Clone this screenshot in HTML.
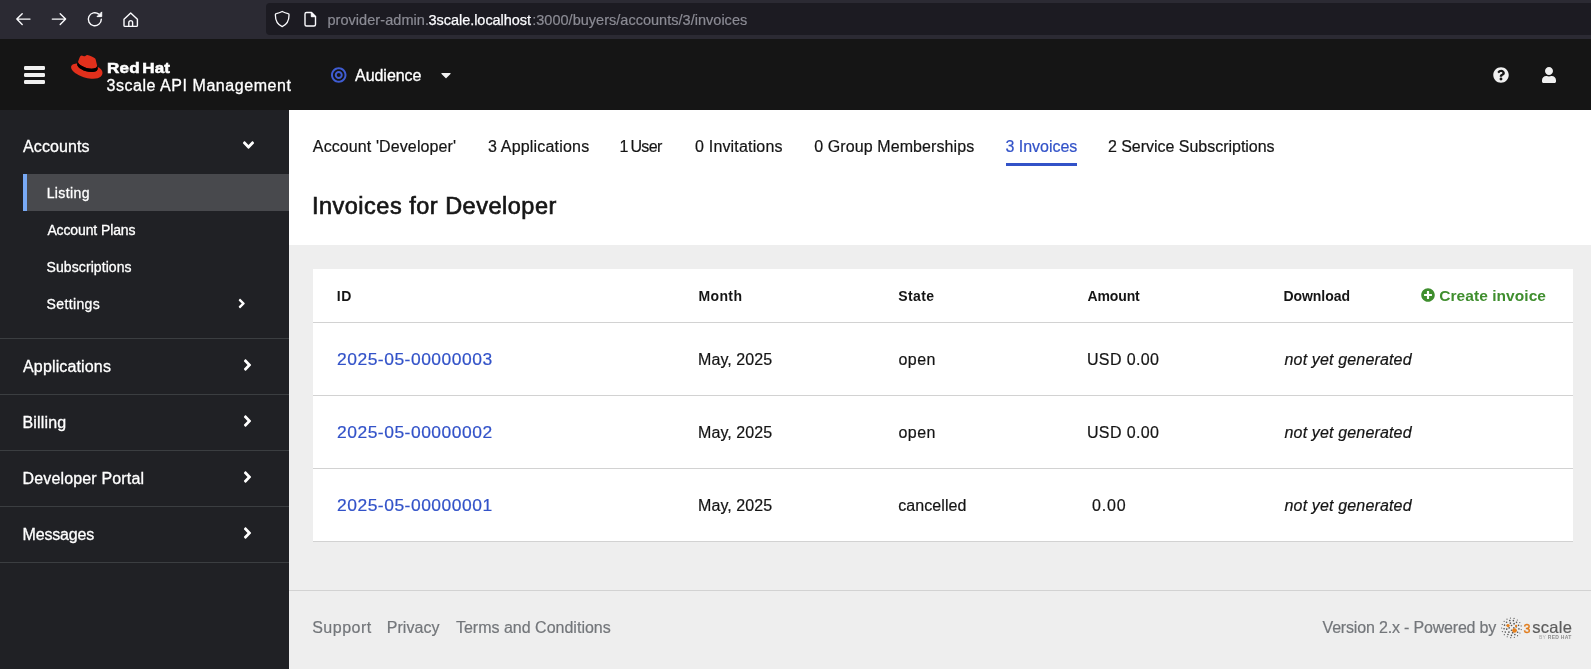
<!DOCTYPE html>
<html lang="en"><head><meta charset="utf-8"><title>Invoices for Developer | Red Hat 3scale API Management</title>
<style>
html,body{margin:0;padding:0;width:1591px;height:669px;overflow:hidden;background:#eeeeee;font-family:'Liberation Sans', sans-serif;}
*{box-sizing:border-box}
a{text-decoration:none}
h1{margin:0}
.t{position:absolute;white-space:pre;display:block;margin:0;padding:0;}
.ic{position:absolute;display:block;overflow:visible}
#page{position:absolute;left:0;top:0;width:1591px;height:669px;will-change:transform;overflow:hidden}
#chrome{position:absolute;left:0;top:0;width:1591px;height:39px;background:#2b2a33}
#urlbar{position:absolute;left:266px;top:3px;width:1335px;height:32px;border-radius:4px;background:#1c1b22}
#masthead{position:absolute;left:0;top:39px;width:1591px;height:71px;background:#151515}
#sidebar{position:absolute;left:0;top:110px;width:289px;height:559px;background:#202125}
#sidebar .current{position:absolute;left:23px;top:174px;width:266px;height:37px;background:#48494d;border-left:4px solid #78a9f5}
.div{position:absolute;left:0;width:289px;height:1px;background:#3b3e41}
#pagehead{position:absolute;left:289px;top:110px;width:1302px;height:135px;background:#fff}
#tabline{position:absolute;left:1006px;top:163px;width:71px;height:3px;background:#3252c8}
#card{position:absolute;left:313px;top:269px;width:1260px;height:273px;background:#fff}
.rule{position:absolute;left:313px;width:1260px;height:1px;background:#d2d2d2}
#footrule{position:absolute;left:289px;top:590px;width:1302px;height:1px;background:#d2d2d2}
.bar{position:absolute;left:24.400px;width:21px;height:4px;border-radius:1.200px;background:#f0f0f0}
</style></head>
<body>
<div id="page">
<div id="chrome">
 <div id="urlbar"></div>
 
<svg class="ic" style="left:0;top:0" width="1591" height="39" viewBox="0 0 1591 39" fill="none" stroke="#fbfbfe" stroke-width="1.400" stroke-linecap="round" stroke-linejoin="round">
 <path d="M30 19.100H17M22.200 13.700 16.800 19.100l5.400 5.400"/>
 <path d="M52.300 19.100h13M60.200 13.700l5.400 5.400-5.400 5.400"/>
 <path d="M101.300 19.200a6.500 6.500 0 1 1-2.500-5.100"/>
 <path d="M101.700 12.300v4.300h-4.300z" fill="#fbfbfe" stroke-width="1"/>
 <path d="M124 19.300l6.700-6.300 6.700 6.300v6.100a1 1 0 0 1-1 1h-11.400a1 1 0 0 1-1-1z"/>
 <path d="M128.800 26.200v-3.700a1.900 1.900 0 0 1 3.800 0v3.700"/>
 <path d="M282.2 11.5c-2 1.1-4.1 1.8-5.9 2.1a1.1 1.1 0 0 0-.95 1.1c0 5.9 1.9 9.7 6.850 11.9 4.950-2.200 6.850-6 6.850-11.900a1.100 1.100 0 0 0-.95-1.100c-1.800-.3-3.900-1-5.900-2.100z" stroke-width="1.3"/>
 <path d="M305 14a1.500 1.500 0 0 1 1.500-1.500h5l4 4v8a1.500 1.500 0 0 1-1.500 1.500h-7.500a1.500 1.500 0 0 1-1.500-1.500z" stroke-width="1.400"/>
 <path d="M311.300 12.600v4.100h4.100z" fill="#fbfbfe" stroke-width="1"/>
</svg>
 <span class="t" style="left:327.41px;top:8.98px;font-size:14.5px;line-height:22px;font-weight:400;color:#8b8b94;letter-spacing:0.058px;-webkit-text-stroke:0.2px #8b8b94;">provider-admin.</span><span class="t" style="left:428.61px;top:8.98px;font-size:14.5px;line-height:22px;font-weight:400;color:#fbfbfe;letter-spacing:-0.050px;-webkit-text-stroke:0.25px #fbfbfe;">3scale.localhost</span><span class="t" style="left:532.21px;top:8.98px;font-size:14.5px;line-height:22px;font-weight:400;color:#8b8b94;letter-spacing:0.020px;-webkit-text-stroke:0.2px #8b8b94;">:3000/buyers/accounts/3/invoices</span>
</div>
<header id="masthead"></header>
<div class="bar" style="top:65.500px"></div><div class="bar" style="top:73px"></div><div class="bar" style="top:80.400px"></div>
<svg class="ic" style="left:70.9px;top:55.4px" width="31.6" height="23.8" viewBox="0 0 191.4 145" preserveAspectRatio="none"><path fill="#e1301c" d="M127.47,83.49c12.51,0,30.61-2.58,30.61-17.46a14,14,0,0,0-.31-3.42l-7.45-32.36c-1.72-7.12-3.23-10.35-15.73-16.6C124.89,8.69,103.76.5,97.51.5,91.69.5,90,8,83.06,8c-6.680,0-11.640-5.600-17.890-5.600-6,0-9.910,4.090-12.930,12.500,0,0-8.410,23.720-9.490,27.160A6.430,6.430,0,0,0,42.530,44c0,9.220,36.300,39.450,84.940,39.450M160,72.070c1.730,8.190,1.730,9.050,1.730,10.130,0,14-15.740,21.770-36.430,21.770C78.540,104,37.580,76.600,37.580,58.490a18.450,18.450,0,0,1,1.510-7.330C22.270,52,.5,55,.5,74.220c0,31.480,74.590,70.280,133.650,70.280,45.280,0,56.700-20.480,56.700-36.650,0-12.720-11-27.160-30.830-35.780"/><path fill="#000" d="M160,72.070c1.730,8.190,1.730,9.050,1.730,10.130,0,14-15.740,21.770-36.430,21.770C78.540,104,37.580,76.600,37.580,58.490a18.450,18.450,0,0,1,1.510-7.330l3.660-9.060A6.430,6.430,0,0,0,42.530,44c0,9.220,36.300,39.450,84.940,39.450,12.510,0,30.610-2.580,30.610-17.460a14,14,0,0,0-.31-3.420Z"/></svg>
<span class="t" style="left:106.72px;top:55.53px;font-size:15.5px;line-height:24px;font-weight:700;color:#fff;letter-spacing:0.150px;word-spacing:-2.2px;-webkit-text-stroke:0.55px #fff;transform-origin:0 50%;transform:scaleX(1.1);">Red Hat</span><span class="t" style="left:106.46px;top:74.26px;font-size:16px;line-height:24px;font-weight:400;color:#fff;letter-spacing:0.549px;-webkit-text-stroke:0.3px #fff;">3scale API Management</span>
<svg class="ic" style="left:331.40px;top:67.20px;" width="15.50" height="16.00" viewBox="0 0 496 512"><path fill="#3f5cd2" d="M248 8C111.030 8 0 119.030 0 256s111.030 248 248 248 248-111.030 248-248S384.970 8 248 8zm0 432c-101.690 0-184-82.290-184-184 0-101.690 82.290-184 184-184 101.690 0 184 82.290 184 184 0 101.690-82.290 184-184 184zm0-312c-70.690 0-128 57.310-128 128s57.310 128 128 128 128-57.310 128-128-57.310-128-128-128zm0 192c-35.290 0-64-28.710-64-64s28.710-64 64-64 64 28.710 64 64-28.710 64-64 64z"/></svg>
<span class="t" style="left:355.03px;top:64.06px;font-size:16px;line-height:24px;font-weight:400;color:#fff;letter-spacing:-0.039px;-webkit-text-stroke:0.3px #fff;">Audience</span>
<svg class="ic" style="left:440.70px;top:67.00px;" width="10.00" height="16.00" viewBox="0 0 320 512"><path fill="#f0f0f0" d="M31.3 192h257.3c17.800 0 26.700 21.500 14.100 34.100L174.100 354.800c-7.800 7.800-20.500 7.800-28.300 0L17.200 226.100C4.600 213.500 13.500 192 31.300 192z"/></svg>
<svg class="ic" style="left:1493.00px;top:67.00px;" width="16.00" height="16.00" viewBox="0 0 512 512"><path fill="#f0f0f0" d="M504 256c0 136.997-111.043 248-248 248S8 392.997 8 256C8 119.083 119.043 8 256 8s248 111.083 248 248zM262.655 90c-54.497 0-89.255 22.957-116.549 63.758-3.536 5.286-2.353 12.415 2.715 16.258l34.699 26.31c5.205 3.947 12.621 3.008 16.665-2.122 17.864-22.658 30.113-35.797 57.303-35.797 20.429 0 45.698 13.148 45.698 32.958 0 14.976-12.363 22.667-32.534 33.976C247.128 238.528 216 254.941 216 296v4c0 6.627 5.373 12 12 12h56c6.627 0 12-5.373 12-12v-1.333c0-28.462 83.186-29.647 83.186-106.667 0-58.002-60.165-102-116.531-102zM256 338c-25.365 0-46 20.635-46 46 0 25.364 20.635 46 46 46s46-20.636 46-46c0-25.365-20.635-46-46-46z"/></svg>
<svg class="ic" style="left:1542.00px;top:66.80px;" width="14.00" height="16.00" viewBox="0 0 448 512"><path fill="#f0f0f0" d="M224 256c70.7 0 128-57.3 128-128S294.7 0 224 0 96 57.3 96 128s57.3 128 128 128zm89.6 32h-16.7c-22.2 10.2-46.9 16-72.9 16s-50.6-5.8-72.9-16h-16.700C60.2 288 0 348.2 0 422.400V464c0 26.5 21.5 48 48 48h352c26.5 0 48-21.5 48-48v-41.600c0-74.200-60.200-134.400-134.400-134.400z"/></svg>
<nav id="sidebar"></nav>
<div id="sidebar-items">
 <div class="current" style="position:absolute;left:23px;top:174px;width:266px;height:37px;background:#48494d;border-left:4px solid #78a9f5"></div>
 <div class="div" style="top:338px"></div><div class="div" style="top:394px"></div><div class="div" style="top:450px"></div><div class="div" style="top:506px"></div><div class="div" style="top:562px"></div>
 <a href="#" class="t" style="left:23.06px;top:134.76px;font-size:16px;line-height:24px;font-weight:400;color:#fff;letter-spacing:0.086px;-webkit-text-stroke:0.3px #fff;">Accounts</a><svg class="ic" style="left:243.70px;top:136.20px;transform:rotate(90deg);" width="9.00" height="18.00" viewBox="0 0 256 512"><path fill="#fff" d="M224.3 273l-136 136c-9.400 9.400-24.600 9.400-33.900 0l-22.600-22.600c-9.400-9.400-9.400-24.600 0-33.900l96.400-96.400-96.400-96.400c-9.400-9.400-9.400-24.600 0-33.900L54.300 103c9.400-9.400 24.600-9.400 33.900 0l136 136c9.500 9.400 9.500 24.600.1 34z"/></svg>
 <a href="#" class="t" style="left:46.67px;top:182.65px;font-size:14px;line-height:21px;font-weight:400;color:#fff;letter-spacing:0.384px;-webkit-text-stroke:0.3px #fff;">Listing</a><a href="#" class="t" style="left:47.39px;top:219.65px;font-size:14px;line-height:21px;font-weight:400;color:#fff;letter-spacing:-0.117px;-webkit-text-stroke:0.3px #fff;">Account Plans</a><a href="#" class="t" style="left:46.58px;top:256.65px;font-size:14px;line-height:21px;font-weight:400;color:#fff;letter-spacing:0.082px;-webkit-text-stroke:0.3px #fff;">Subscriptions</a><a href="#" class="t" style="left:46.58px;top:293.65px;font-size:14px;line-height:21px;font-weight:400;color:#fff;letter-spacing:0.359px;-webkit-text-stroke:0.3px #fff;">Settings</a><svg class="ic" style="left:238.00px;top:295.50px;" width="7.50" height="15.00" viewBox="0 0 256 512"><path fill="#fff" d="M224.3 273l-136 136c-9.400 9.400-24.600 9.400-33.900 0l-22.600-22.600c-9.400-9.400-9.400-24.600 0-33.900l96.400-96.400-96.400-96.400c-9.400-9.400-9.400-24.600 0-33.900L54.300 103c9.400-9.400 24.600-9.400 33.900 0l136 136c9.500 9.400 9.500 24.600.1 34z"/></svg>
 <a href="#" class="t" style="left:23.06px;top:355.46px;font-size:16px;line-height:24px;font-weight:400;color:#fff;letter-spacing:0.143px;-webkit-text-stroke:0.3px #fff;">Applications</a><svg class="ic" style="left:243.20px;top:356.30px;" width="9.00" height="18.00" viewBox="0 0 256 512"><path fill="#fff" d="M224.3 273l-136 136c-9.400 9.400-24.600 9.400-33.900 0l-22.600-22.600c-9.400-9.400-9.400-24.600 0-33.900l96.400-96.400-96.400-96.400c-9.400-9.400-9.400-24.600 0-33.900L54.300 103c9.400-9.400 24.600-9.400 33.900 0l136 136c9.500 9.400 9.500 24.600.1 34z"/></svg>
 <a href="#" class="t" style="left:22.49px;top:411.46px;font-size:16px;line-height:24px;font-weight:400;color:#fff;letter-spacing:0.175px;-webkit-text-stroke:0.3px #fff;">Billing</a><svg class="ic" style="left:243.20px;top:412.30px;" width="9.00" height="18.00" viewBox="0 0 256 512"><path fill="#fff" d="M224.3 273l-136 136c-9.400 9.400-24.600 9.400-33.900 0l-22.600-22.600c-9.400-9.400-9.400-24.600 0-33.900l96.400-96.400-96.400-96.400c-9.400-9.400-9.400-24.600 0-33.900L54.300 103c9.400-9.400 24.600-9.400 33.900 0l136 136c9.500 9.400 9.500 24.600.1 34z"/></svg>
 <a href="#" class="t" style="left:22.49px;top:467.46px;font-size:16px;line-height:24px;font-weight:400;color:#fff;letter-spacing:0.160px;-webkit-text-stroke:0.3px #fff;">Developer Portal</a><svg class="ic" style="left:243.20px;top:468.30px;" width="9.00" height="18.00" viewBox="0 0 256 512"><path fill="#fff" d="M224.3 273l-136 136c-9.400 9.400-24.600 9.400-33.900 0l-22.600-22.600c-9.400-9.400-9.400-24.600 0-33.900l96.400-96.400-96.400-96.400c-9.400-9.400-9.400-24.600 0-33.900L54.300 103c9.400-9.400 24.600-9.400 33.900 0l136 136c9.500 9.400 9.500 24.600.1 34z"/></svg>
 <a href="#" class="t" style="left:22.49px;top:523.46px;font-size:16px;line-height:24px;font-weight:400;color:#fff;letter-spacing:-0.157px;-webkit-text-stroke:0.3px #fff;">Messages</a><svg class="ic" style="left:243.20px;top:524.30px;" width="9.00" height="18.00" viewBox="0 0 256 512"><path fill="#fff" d="M224.3 273l-136 136c-9.400 9.400-24.600 9.400-33.900 0l-22.600-22.600c-9.400-9.400-9.400-24.600 0-33.900l96.400-96.400-96.400-96.400c-9.400-9.400-9.400-24.600 0-33.900L54.300 103c9.400-9.400 24.600-9.400 33.900 0l136 136c9.500 9.400 9.500 24.600.1 34z"/></svg>
</div>
<main>
 <div id="pagehead"></div>
 <a href="#" class="t" style="left:312.86px;top:134.56px;font-size:16px;line-height:24px;font-weight:400;color:#151515;letter-spacing:0.104px;-webkit-text-stroke:0.2px #151515;">Account 'Developer'</a><a href="#" class="t" style="left:487.92px;top:134.56px;font-size:16px;line-height:24px;font-weight:400;color:#151515;letter-spacing:0.197px;-webkit-text-stroke:0.2px #151515;">3 Applications</a><a href="#" class="t" style="left:619.58px;top:134.56px;font-size:16px;line-height:24px;font-weight:400;color:#151515;letter-spacing:-0.645px;word-spacing:-1.2px;-webkit-text-stroke:0.2px #151515;">1 User</a><a href="#" class="t" style="left:695.08px;top:134.56px;font-size:16px;line-height:24px;font-weight:400;color:#151515;letter-spacing:0.170px;-webkit-text-stroke:0.2px #151515;">0 Invitations</a><a href="#" class="t" style="left:814.28px;top:134.56px;font-size:16px;line-height:24px;font-weight:400;color:#151515;letter-spacing:0.090px;-webkit-text-stroke:0.2px #151515;">0 Group Memberships</a><a href="#" class="t" style="left:1005.47px;top:134.56px;font-size:16px;line-height:24px;font-weight:400;color:#3252c8;letter-spacing:-0.021px;-webkit-text-stroke:0.2px #3252c8;">3 Invoices</a><a href="#" class="t" style="left:1107.91px;top:134.56px;font-size:16px;line-height:24px;font-weight:400;color:#151515;letter-spacing:-0.022px;-webkit-text-stroke:0.2px #151515;">2 Service Subscriptions</a>
 <div id="tabline"></div>
 <h1 class="t" style="left:311.92px;top:188.06px;font-size:23.5px;line-height:36px;font-weight:400;color:#151515;letter-spacing:0.504px;-webkit-text-stroke:0.65px #151515;">Invoices for Developer</h1>
 <div id="card"></div>
 <div class="rule" style="top:322px"></div><div class="rule" style="top:395px"></div><div class="rule" style="top:468px"></div><div class="rule" style="top:541px"></div>
 <span class="t" style="left:336.73px;top:285.65px;font-size:14px;line-height:21px;font-weight:700;color:#151515;letter-spacing:0.653px;">ID</span><span class="t" style="left:698.40px;top:285.65px;font-size:14px;line-height:21px;font-weight:700;color:#151515;letter-spacing:0.395px;">Month</span><span class="t" style="left:898.15px;top:285.65px;font-size:14px;line-height:21px;font-weight:700;color:#151515;letter-spacing:0.421px;">State</span><span class="t" style="left:1087.59px;top:285.65px;font-size:14px;line-height:21px;font-weight:700;color:#151515;letter-spacing:-0.138px;">Amount</span><span class="t" style="left:1283.40px;top:285.65px;font-size:14px;line-height:21px;font-weight:700;color:#151515;letter-spacing:-0.049px;">Download</span>
 <svg class="ic" style="left:1421.20px;top:288.10px;" width="14.00" height="14.00" viewBox="0 0 512 512"><path fill="#3f8e2e" d="M256 8C119 8 8 119 8 256s111 248 248 248 248-111 248-248S393 8 256 8zm144 276c0 6.6-5.400 12-12 12h-92v92c0 6.6-5.400 12-12 12h-56c-6.600 0-12-5.400-12-12v-92h-92c-6.600 0-12-5.400-12-12v-56c0-6.600 5.400-12 12-12h92v-92c0-6.600 5.400-12 12-12h56c6.600 0 12 5.400 12 12v92h92c6.600 0 12 5.400 12 12v56z"/></svg><a href="#" class="t" style="left:1439.28px;top:284.43px;font-size:15.5px;line-height:24px;font-weight:700;color:#3f8e2e;letter-spacing:0.056px;">Create invoice</a>
 <a href="#" class="t" style="left:336.75px;top:348.46px;font-size:16px;line-height:24px;font-weight:400;color:#3252c8;letter-spacing:0.472px;transform-origin:0 50%;transform:scaleX(1.09);-webkit-text-stroke:0.2px #3252c8;">2025-05-00000003</a><span class="t" style="left:698.12px;top:348.46px;font-size:16px;line-height:24px;font-weight:400;color:#151515;letter-spacing:0.062px;-webkit-text-stroke:0.2px #151515;">May, 2025</span><span class="t" style="left:898.56px;top:348.46px;font-size:16px;line-height:24px;font-weight:400;color:#151515;letter-spacing:0.408px;-webkit-text-stroke:0.2px #151515;">open</span><span class="t" style="left:1086.91px;top:348.46px;font-size:16px;line-height:24px;font-weight:400;color:#151515;letter-spacing:0.378px;-webkit-text-stroke:0.2px #151515;">USD 0.00</span><i class="t" style="left:1284.55px;top:348.46px;font-size:16px;line-height:24px;font-weight:400;color:#151515;letter-spacing:0.155px;font-style:italic;-webkit-text-stroke:0.2px #151515;">not yet generated</i><a href="#" class="t" style="left:336.75px;top:421.46px;font-size:16px;line-height:24px;font-weight:400;color:#3252c8;letter-spacing:0.472px;transform-origin:0 50%;transform:scaleX(1.09);-webkit-text-stroke:0.2px #3252c8;">2025-05-00000002</a><span class="t" style="left:698.12px;top:421.46px;font-size:16px;line-height:24px;font-weight:400;color:#151515;letter-spacing:0.062px;-webkit-text-stroke:0.2px #151515;">May, 2025</span><span class="t" style="left:898.56px;top:421.46px;font-size:16px;line-height:24px;font-weight:400;color:#151515;letter-spacing:0.408px;-webkit-text-stroke:0.2px #151515;">open</span><span class="t" style="left:1086.91px;top:421.46px;font-size:16px;line-height:24px;font-weight:400;color:#151515;letter-spacing:0.378px;-webkit-text-stroke:0.2px #151515;">USD 0.00</span><i class="t" style="left:1284.55px;top:421.46px;font-size:16px;line-height:24px;font-weight:400;color:#151515;letter-spacing:0.155px;font-style:italic;-webkit-text-stroke:0.2px #151515;">not yet generated</i><a href="#" class="t" style="left:336.75px;top:494.46px;font-size:16px;line-height:24px;font-weight:400;color:#3252c8;letter-spacing:0.472px;transform-origin:0 50%;transform:scaleX(1.09);-webkit-text-stroke:0.2px #3252c8;">2025-05-00000001</a><span class="t" style="left:698.12px;top:494.46px;font-size:16px;line-height:24px;font-weight:400;color:#151515;letter-spacing:0.062px;-webkit-text-stroke:0.2px #151515;">May, 2025</span><span class="t" style="left:898.16px;top:494.46px;font-size:16px;line-height:24px;font-weight:400;color:#151515;letter-spacing:0.094px;-webkit-text-stroke:0.2px #151515;">cancelled</span><span class="t" style="left:1091.88px;top:494.46px;font-size:16px;line-height:24px;font-weight:400;color:#151515;letter-spacing:0.878px;-webkit-text-stroke:0.2px #151515;">0.00</span><i class="t" style="left:1284.55px;top:494.46px;font-size:16px;line-height:24px;font-weight:400;color:#151515;letter-spacing:0.155px;font-style:italic;-webkit-text-stroke:0.2px #151515;">not yet generated</i>
 <div id="footrule"></div>
 <a href="#" class="t" style="left:312.18px;top:616.46px;font-size:16px;line-height:24px;font-weight:400;color:#73767a;letter-spacing:0.510px;-webkit-text-stroke:0.2px #73767a;">Support</a><a href="#" class="t" style="left:386.68px;top:616.46px;font-size:16px;line-height:24px;font-weight:400;color:#73767a;letter-spacing:0.056px;-webkit-text-stroke:0.2px #73767a;">Privacy</a><a href="#" class="t" style="left:455.90px;top:616.46px;font-size:16px;line-height:24px;font-weight:400;color:#73767a;letter-spacing:0.006px;-webkit-text-stroke:0.2px #73767a;">Terms and Conditions</a><span class="t" style="left:1322.53px;top:616.46px;font-size:16px;line-height:24px;font-weight:400;color:#73767a;letter-spacing:-0.176px;-webkit-text-stroke:0.2px #73767a;">Version 2.x - Powered by</span>
 <svg class="ic" style="left:0;top:0" width="1591" height="669" viewBox="0 0 1591 669"><circle cx="1513.85" cy="627.90" r="0.81" fill="#555"/><circle cx="1511.50" cy="630.25" r="0.81" fill="#555"/><circle cx="1509.15" cy="627.90" r="0.81" fill="#555"/><circle cx="1511.50" cy="625.55" r="0.81" fill="#555"/><circle cx="1515.70" cy="630.47" r="0.85" fill="#555"/><circle cx="1512.65" cy="632.69" r="0.85" fill="#555"/><circle cx="1508.93" cy="632.10" r="0.85" fill="#555"/><circle cx="1506.71" cy="629.05" r="0.85" fill="#555"/><circle cx="1507.30" cy="625.33" r="0.85" fill="#555"/><circle cx="1510.35" cy="623.11" r="0.85" fill="#555"/><circle cx="1514.07" cy="623.70" r="0.85" fill="#555"/><circle cx="1516.29" cy="626.75" r="0.85" fill="#555"/><circle cx="1514.90" cy="634.58" r="0.81" fill="#555"/><circle cx="1511.41" cy="635.39" r="0.81" fill="#555"/><circle cx="1507.94" cy="634.49" r="0.81" fill="#555"/><circle cx="1505.28" cy="632.08" r="0.81" fill="#555"/><circle cx="1504.05" cy="628.71" r="0.81" fill="#555"/><circle cx="1504.53" cy="625.16" r="0.81" fill="#555"/><circle cx="1506.60" cy="622.23" r="0.81" fill="#555"/><circle cx="1509.80" cy="620.61" r="0.81" fill="#555"/><circle cx="1513.38" cy="620.65" r="0.81" fill="#555"/><circle cx="1516.54" cy="622.36" r="0.81" fill="#555"/><circle cx="1518.54" cy="625.33" r="0.81" fill="#555"/><circle cx="1518.92" cy="628.90" r="0.81" fill="#555"/><circle cx="1517.61" cy="632.23" r="0.81" fill="#555"/><circle cx="1510.72" cy="637.71" r="0.59" fill="#555"/><circle cx="1507.23" cy="636.77" r="0.59" fill="#555"/><circle cx="1504.31" cy="634.63" r="0.59" fill="#555"/><circle cx="1502.37" cy="631.58" r="0.59" fill="#555"/><circle cx="1501.66" cy="628.03" r="0.59" fill="#555"/><circle cx="1502.27" cy="624.47" r="0.59" fill="#555"/><circle cx="1504.14" cy="621.36" r="0.59" fill="#555"/><circle cx="1507.00" cy="619.15" r="0.59" fill="#555"/><circle cx="1510.46" cy="618.11" r="0.59" fill="#555"/><circle cx="1514.07" cy="618.40" r="0.59" fill="#555"/><circle cx="1517.33" cy="619.97" r="0.59" fill="#555"/><circle cx="1519.80" cy="622.61" r="0.59" fill="#555"/><circle cx="1521.15" cy="625.96" r="0.59" fill="#555"/><circle cx="1521.20" cy="629.58" r="0.59" fill="#555"/><circle cx="1519.94" cy="632.97" r="0.59" fill="#555"/><circle cx="1517.54" cy="635.68" r="0.59" fill="#555"/><circle cx="1514.32" cy="637.33" r="0.59" fill="#555"/><circle cx="1508.08" cy="625.55" r="1.60" fill="#e8811c"/><circle cx="1516.10" cy="625.97" r="1.10" fill="#e8811c"/><circle cx="1514.50" cy="630.57" r="2.30" fill="#e8811c"/></svg>
 <span class="t" style="left:1523.51px;top:620.07px;font-size:12.5px;line-height:19px;font-weight:400;color:#e07a18;-webkit-text-stroke:0.4px #e07a18;">3</span><span class="t" style="left:1532.36px;top:615.48px;font-size:16.5px;line-height:25px;font-weight:400;color:#5c5c5c;letter-spacing:0.246px;-webkit-text-stroke:0.2px #5c5c5c;">scale</span><span class="t" style="left:1539.05px;top:633.07px;font-size:5px;line-height:8px;font-weight:400;color:#a8a8a8;letter-spacing:0.021px;">BY</span><span class="t" style="left:1547.76px;top:633.07px;font-size:5px;line-height:8px;font-weight:700;color:#8c8c8c;letter-spacing:0.276px;">RED HAT</span>
</main>
</div>
</body></html>
